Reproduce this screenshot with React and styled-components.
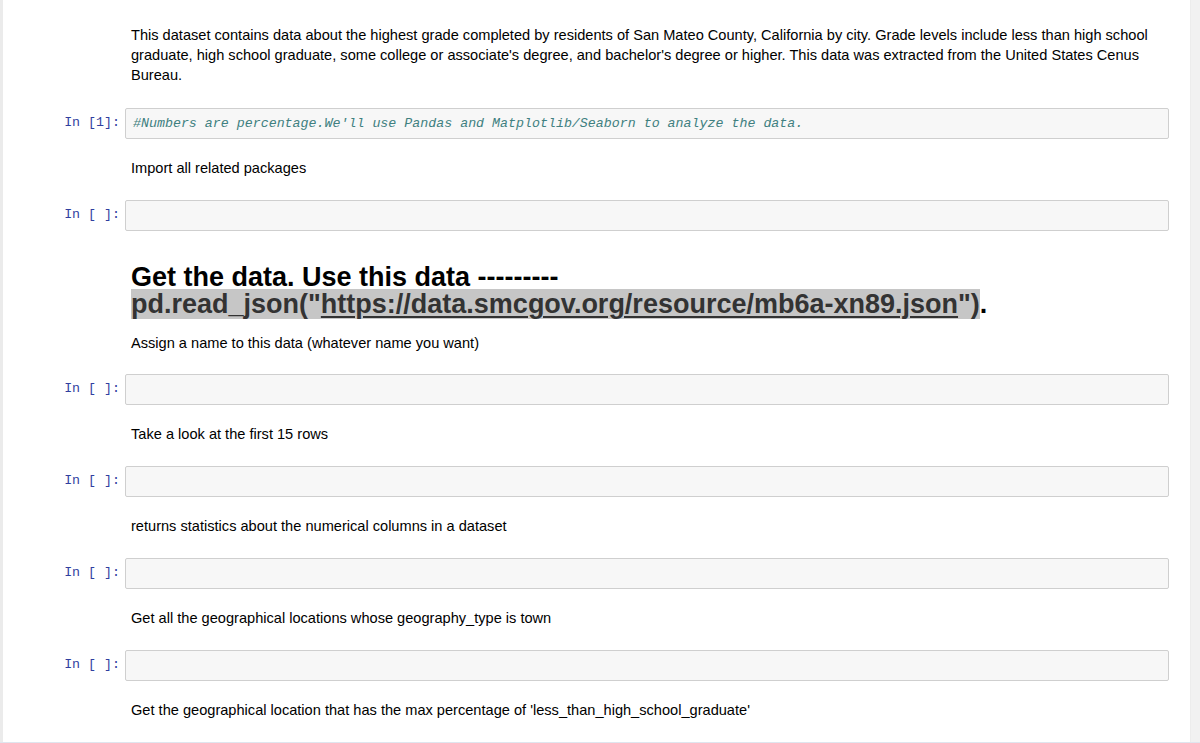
import { createGlobalStyle, styled } from 'styled-components'

const GlobalStyle = createGlobalStyle`
  html, body {
    margin: 0;
    padding: 0;
    background: #fff;
    overflow: hidden;
  }
  body {
    font-family: "Liberation Sans", Arial, sans-serif;
    color: #000;
  }
`

const Page = styled.div`
  display: flex;
  height: 743px;
  overflow: hidden;
  border-left: 3px solid #ebebeb;
  box-sizing: border-box;
`

const Notebook = styled.div`
  flex: 1;
  display: flex;
  flex-direction: column;
  padding-top: 25px;
`

const Scrollbar = styled.div`
  width: 9px;
  background: #f1f1f1;
  border-left: 1px solid #ececec;
`

const BottomEdge = styled.div`
  position: fixed;
  left: 0;
  right: 0;
  bottom: 0;
  height: 1px;
  background: #dfe5ee;
`

const Row = styled.div`
  display: flex;
  align-items: flex-start;
  flex-shrink: 0;
`

const Prompt = styled.div`
  width: 122px;
  flex-shrink: 0;
  box-sizing: border-box;
  padding: 6px 5px 0 0;
  text-align: right;
  font-family: "Liberation Mono", "DejaVu Sans Mono", monospace;
  font-size: 13.3px;
  line-height: 17px;
  color: #303f9f;
  white-space: pre;
`

const InputArea = styled.div`
  width: 1044px;
  height: 31px;
  box-sizing: border-box;
  border: 1px solid #cfcfcf;
  border-radius: 2px;
  background: #f7f7f7;
  padding: 0 7px;
  font-family: "Liberation Mono", "DejaVu Sans Mono", monospace;
  font-size: 13.3px;
  line-height: 29px;
  white-space: pre;
  overflow: hidden;
`

const Comment = styled.span`
  color: #408080;
  font-style: italic;
`

const Markdown = styled.div`
  width: 1044px;
  box-sizing: border-box;
  padding: ${p => p.$top ?? 19}px 16px ${p => p.$bottom ?? 22}px 6px;
`

const Para = styled.p`
  margin: 0;
  font-size: 14.6px;
  line-height: 20px;
`

const Heading = styled.h1`
  margin: 0 0 15px;
  font-size: 27px;
  line-height: 27px;
  font-weight: 700;
`

const Marked = styled.span`
  background: #c6c6c6;
  color: #333;
`

const Link = styled.span`
  text-decoration: underline;
  text-decoration-thickness: 2px;
  text-underline-offset: 3px;
`

const CodeCell = ({ count = ' ', hidePrompt, children }) => (
  <Row>
    <Prompt>{hidePrompt ? '' : `In [${count}]:`}</Prompt>
    <InputArea>{children}</InputArea>
  </Row>
)

const TextCell = ({ children, top, bottom }) => (
  <Row>
    <Prompt />
    <Markdown $top={top} $bottom={bottom}>{children}</Markdown>
  </Row>
)

const steps = [
  'Take a look at the first 15 rows',
  'returns statistics about the numerical columns in a dataset',
  'Get all the geographical locations whose geography_type is town',
  "Get the geographical location that has the max percentage of 'less_than_high_school_graduate'",
]

export default function App() {
  return (
    <>
      <GlobalStyle />
      <Page>
        <Notebook>
          <TextCell top={0} bottom={23}>
            <Para>
              This dataset contains data about the highest grade completed by residents of San Mateo County, California by city. Grade levels include less than high school graduate, high school graduate, some college or associate's degree, and bachelor's degree or higher. This data was extracted from the United States Cenus Bureau.
            </Para>
          </TextCell>
          <CodeCell count="1">
            <Comment>#Numbers are percentage.We'll use Pandas and Matplotlib/Seaborn to analyze the data.</Comment>
          </CodeCell>
          <TextCell>
            <Para>Import all related packages</Para>
          </TextCell>
          <CodeCell />
          <TextCell top={33} bottom={21}>
            <Heading>
              Get the data. Use this data ---------
              <br />
              <Marked>pd.read_json("<Link>https://data.smcgov.org/resource/mb6a-xn89.json</Link>")</Marked>.
            </Heading>
            <Para>Assign a name to this data (whatever name you want)</Para>
          </TextCell>
          {steps.map(s => (
            <div key={s}>
              <CodeCell />
              <TextCell>
                <Para>{s}</Para>
              </TextCell>
            </div>
          ))}
          {/* next cell, only its top edge is in view */}
          <CodeCell hidePrompt />
        </Notebook>
        <Scrollbar />
      </Page>
      <BottomEdge />
    </>
  )
}
